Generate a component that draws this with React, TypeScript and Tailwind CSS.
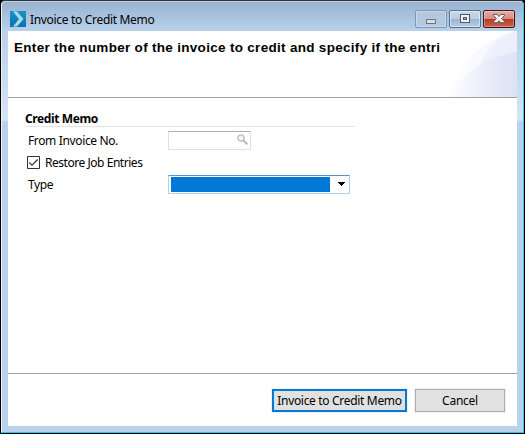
import type { ReactNode } from "react";

const uiFont = "font-['Noto_Sans','Open_Sans',sans-serif]";

const tones = {
  muted: "border-[#7f95b0] bg-linear-to-b from-[#b3c8df] to-[#b2cae4] shadow-[inset_0_0_0_1px_rgba(255,255,255,0.3)]",
  normal:
    "border-[#5d6f87] bg-[linear-gradient(180deg,#c6d7ea_0%,#bccfe3_48%,#9bb4ce_50%,#b6cde6_100%)] shadow-[inset_0_0_0_1px_rgba(255,255,255,0.5)]",
  danger:
    "border-[#43141b] bg-[linear-gradient(180deg,#e6ada3_0%,#d78b7e_48%,#b83b24_50%,#cd6048_100%)] shadow-[inset_0_0_0_1px_rgba(255,255,255,0.3)]",
};

function WindowButton({ label, tone, children }: { label: string; tone: keyof typeof tones; children: ReactNode }) {
  return (
    <button
      aria-label={label}
      className={`flex h-[18px] w-8 items-center justify-center rounded-[2px] border ${tones[tone]}`}
    >
      {children}
    </button>
  );
}

function TitleBar() {
  return (
    <header className="flex h-[29px] shrink-0 items-start pl-2 pt-2">
      <svg width="16" height="16" viewBox="0 0 16 16" className="mt-px shrink-0">
        <defs>
          <linearGradient id="logo" x1="0" y1="0" x2="0" y2="1">
            <stop offset="0" stopColor="#1e91ca" />
            <stop offset="1" stopColor="#0873ac" />
          </linearGradient>
        </defs>
        <path d="M0 0h16v16H0z" fill="url(#logo)" />
        <path d="M3 .5h4l6.500 7.500L7 15.500H3L9 8z" fill="#a9d9ef" />
      </svg>
      <h1 className="ml-1 mt-[2px] h-4 whitespace-nowrap text-[12px] leading-4 tracking-[-0.32px]">Invoice to Credit Memo</h1>
      <div className="ml-auto mr-2 flex gap-0.5">
        <WindowButton label="Minimize" tone="muted">
          <svg width="12" height="12" viewBox="0 0 12 12" shapeRendering="crispEdges">
            <path d="M1.5 6.5h9v4h-9z" fill="#ddd" stroke="#6e737c" />
          </svg>
        </WindowButton>
        <WindowButton label="Maximize" tone="normal">
          <svg width="12" height="12" viewBox="0 0 12 12" shapeRendering="crispEdges">
            <path d="M1.500 1.500h9v8h-9z" fill="#f2f2f2" stroke="#50586b" />
            <path d="M4.500 4.500h3v2h-3z" fill="#9dafc5" stroke="#50586b" />
          </svg>
        </WindowButton>
        <WindowButton label="Close" tone="danger">
          <svg width="12" height="12" viewBox="0 0 12 12">
            <path d="M.5 1.500h3.500L6 3.500l2-2h3.500v1L8.500 5.500l3 3.200v1H8L6 7.700l-2 2H.5v-1l3-3.200-3-3z" fill="#f6f6f6" stroke="#5b4a57" strokeWidth="0.9" />
          </svg>
        </WindowButton>
      </div>
    </header>
  );
}

function Banner() {
  return (
    <section className="relative h-[67px] shrink-0 border-b border-[#a0a0a0]">
      <svg className="absolute right-0 top-0" width="72" height="66" viewBox="0 0 72 66">
        <defs>
          <linearGradient id="sweep" x1="0" y1="0" x2="1" y2="0">
            <stop offset="0" stopColor="#fff" />
            <stop offset="0.45" stopColor="#f9fafe" />
            <stop offset="1" stopColor="#eef1fb" />
          </linearGradient>
          <linearGradient id="sweepInner" x1="0" y1="0" x2="1" y2="0">
            <stop offset="0" stopColor="#e2e7f8" stopOpacity="0" />
            <stop offset="1" stopColor="#dde3f6" />
          </linearGradient>
        </defs>
        <path d="M0 66C8 42 34 8 72 0v66z" fill="url(#sweep)" />
        <path d="M34 34C42 22 48 8 72 1v20C58 23 44 28 34 34z" fill="#e8edfa" fillOpacity=".6" />
        <path d="M2 66C15 44 40 25 72 21v45z" fill="url(#sweepInner)" />
      </svg>
      <h2 className="relative whitespace-nowrap pl-1.5 pt-[9px] font-['Liberation_Sans',Arial,sans-serif] text-[13.5px] leading-4 font-bold tracking-[0.3px] text-black">
        Enter the number of the invoice to credit and specify if the entri
      </h2>
    </section>
  );
}

function CreditMemoForm() {
  return (
    <main className="flex h-[275px] shrink-0 flex-col pl-[17px] pt-[13px]">
      <h3 className="h-4 w-[330px] border-b border-[#e3e3e3] text-[12px] leading-4 font-bold tracking-[-0.38px]">Credit Memo</h3>
      <label className="mt-1 flex h-[19px] items-center pl-[3px]">
        <span className="w-[140px] text-[12px] leading-4 tracking-[-0.36px]">From Invoice No.</span>
        <span className="flex h-[19px] w-[83px] justify-end border border-[#e0e0e8] border-t-[#abadb3] pr-0.5 pt-0.5">
          <svg width="11" height="11" viewBox="0 0 11 11" fill="none">
            <path d="m6.500 6.500 3.800 3.800" stroke="#b8b8b8" strokeWidth="2" />
            <circle cx="4" cy="4" r="3.100" fill="#f4f4f4" stroke="#bdbdbd" strokeWidth="1.300" />
          </svg>
        </span>
      </label>
      <label className="mt-1.5 flex h-[13px] items-center pl-0.5">
        <svg width="13" height="13" viewBox="0 0 13 13" fill="none">
          <path d="M.5.5h12v12H.5z" stroke="#333" />
          <path d="m2.200 6.300 2.800 2.900 5.700-5.700" stroke="#333" strokeWidth="1.200" />
        </svg>
        <span className="ml-[5px] text-[12px] leading-4 tracking-[-0.46px]">Restore Job Entries</span>
      </label>
      <div className="mt-1.5 flex h-[19px] items-center pl-[3px]">
        <span className="w-[140px] text-[12px] leading-4 tracking-[-0.4px]">Type</span>
        <button aria-label="Type" className="flex h-[19px] w-[182px] border border-[#b5cfe7] border-t-[#5794bf] pl-0.5 pt-px">
          <span className="h-[15px] w-[159px] bg-[#0078d7]" />
          <svg width="7" height="4" viewBox="0 0 7 4" className="ml-2 mt-[5px]" shapeRendering="crispEdges">
            <path d="M0 0h7v1H6v1H5v1H4v1H3V3H2V2H1V1H0z" fill="#000" />
          </svg>
        </button>
      </div>
    </main>
  );
}

export default function App() {
  return (
    <div className="h-[434px] w-[525px] bg-black">
      <div className={`${uiFont} h-[434px] w-[525px] overflow-hidden rounded-t-[5px] border border-black border-t-[#38323a] bg-[#b9d1ea] text-[12px] text-black`}>
        <div className="flex h-[432px] flex-col rounded-t-[4px] border border-t-[#c3d3e5] border-r-[#35c9e8] border-b-[#1ec8e8] border-l-[#eef3fa] bg-[linear-gradient(180deg,#99b4d1_0px,#b9d1ea_29px,#d7e4f2_118px,#b9d1ea_120px)]">
          <TitleBar />
          <div className="ml-1.5 flex h-[395px] w-[509px] shrink-0 flex-col bg-white">
            <Banner />
            <CreditMemoForm />
            <footer className="flex grow items-start justify-end gap-2 border-t border-[#a0a0a0] pr-3 pt-[15px]">
              <button className="h-[23px] w-[135px] whitespace-nowrap border-2 border-[#0078d7] bg-[#e1e1e1] text-[12px] leading-[19px] tracking-[-0.32px] shadow-[0_0_0_1px_#f0f0f0]">Invoice to Credit Memo</button>
              <button className="h-[23px] w-[90px] border border-[#adadad] bg-[#e1e1e1] text-[12px] leading-[21px] tracking-[-0.25px] shadow-[0_0_0_1px_#f0f0f0]">Cancel</button>
            </footer>
          </div>
        </div>
      </div>
    </div>
  );
}
